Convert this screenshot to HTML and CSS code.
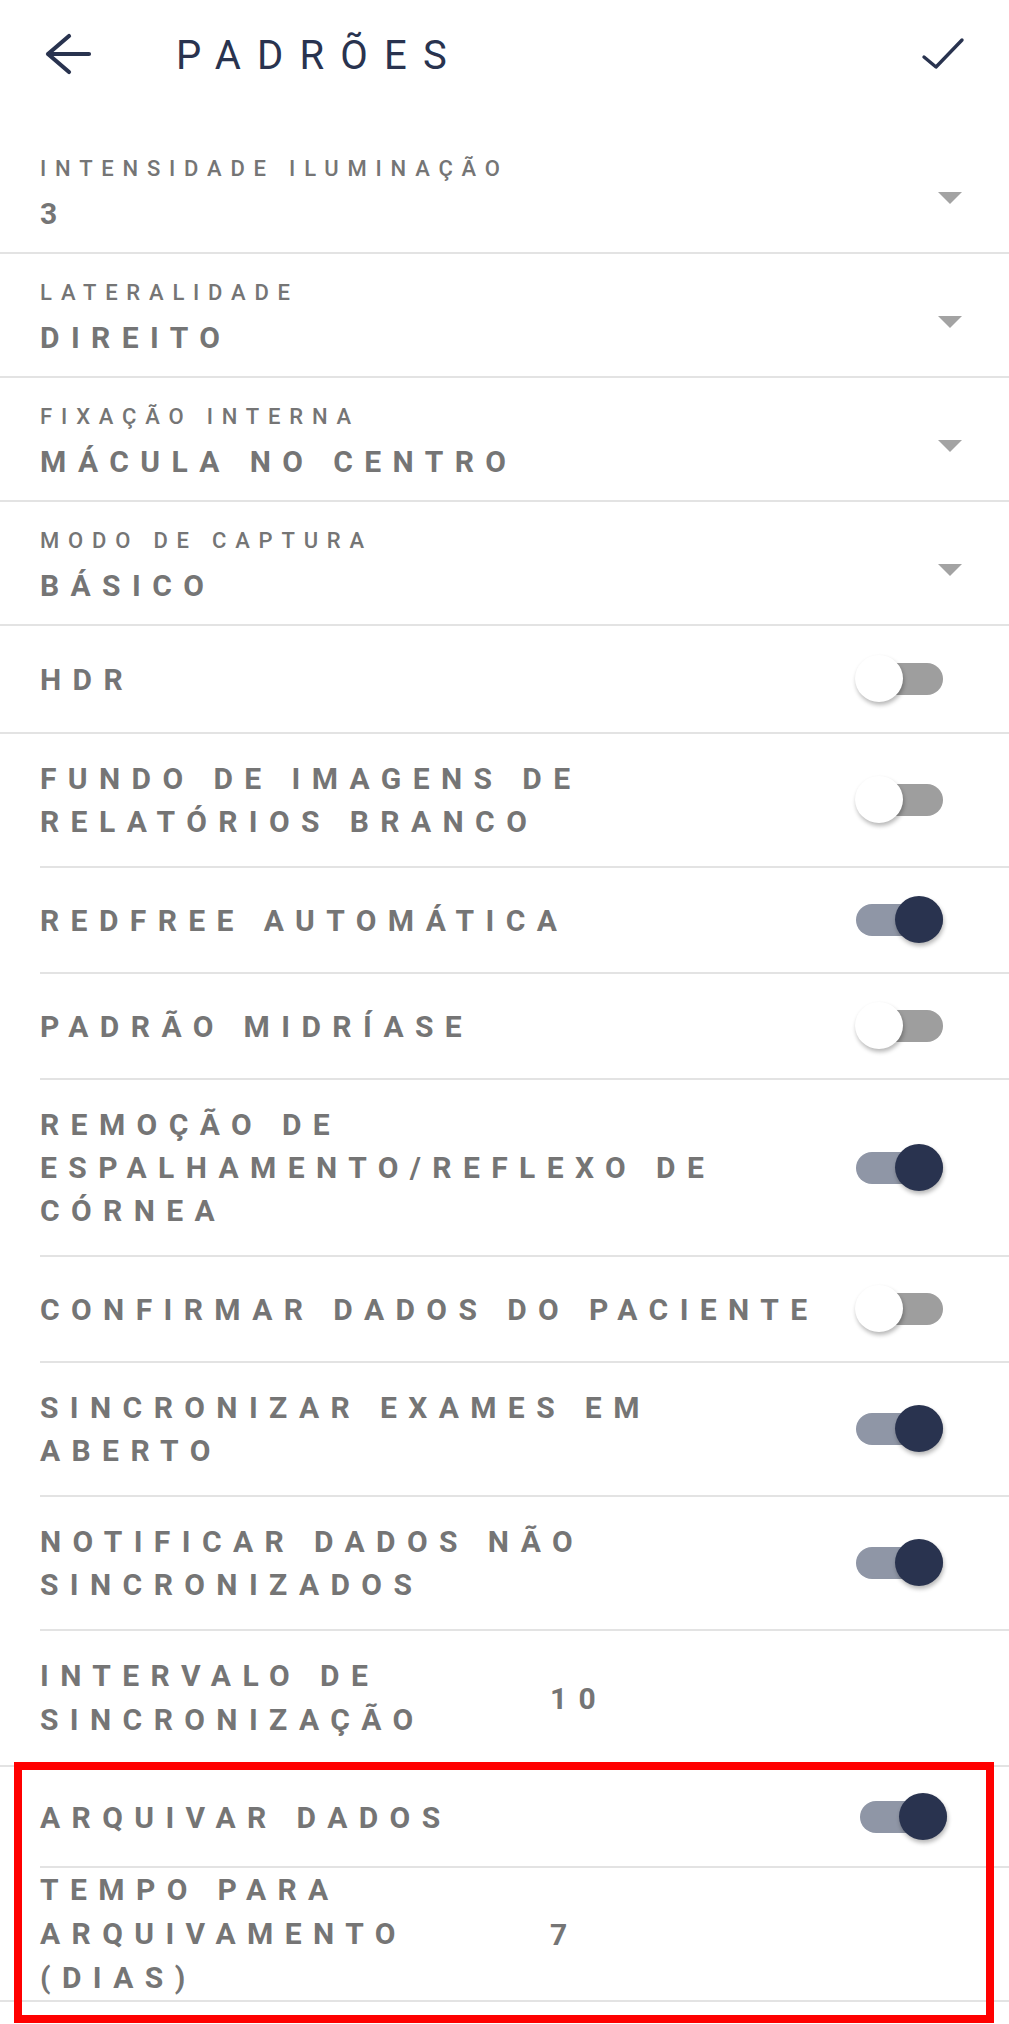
FILE: index.html
```html
<!DOCTYPE html>
<html lang="pt-BR">
<head>
  <meta charset="UTF-8" />
  <meta name="viewport" content="width=device-width, initial-scale=1.0" />
  <title>Padrões</title>
  <link rel="stylesheet" href="styles.css">
</head>
<body>

  <!-- Top bar -->
  <header class="topbar">
    <svg class="icon-back" width="56" height="56" viewBox="0 0 56 56">
      <path d="M49 28H8M29 10L8 28l21 18" fill="none" stroke="#29334f" stroke-width="4.2" stroke-linecap="round" stroke-linejoin="round" />
    </svg>
    <h1 class="title">PADRÕES</h1>
    <svg class="icon-check" width="48" height="48" viewBox="0 0 48 48">
      <path d="M3 27l12 10L41 10" fill="none" stroke="#29334f" stroke-width="3.4" stroke-linecap="round" stroke-linejoin="round" />
    </svg>
  </header>

  <main class="settings">

    <!-- Dropdowns -->
    <div class="select-row">
      <div class="select-body">
        <div class="select-label">INTENSIDADE ILUMINAÇÃO</div>
        <div class="select-value">3</div>
      </div>
      <span class="caret"></span>
    </div>
    <div class="select-row">
      <div class="select-body">
        <div class="select-label">LATERALIDADE</div>
        <div class="select-value">DIREITO</div>
      </div>
      <span class="caret"></span>
    </div>
    <div class="select-row">
      <div class="select-body">
        <div class="select-label">FIXAÇÃO INTERNA</div>
        <div class="select-value">MÁCULA NO CENTRO</div>
      </div>
      <span class="caret"></span>
    </div>
    <div class="select-row">
      <div class="select-body">
        <div class="select-label">MODO DE CAPTURA</div>
        <div class="select-value">BÁSICO</div>
      </div>
      <span class="caret"></span>
    </div>

    <!-- Switches -->
    <div class="switch-row full">
      <span class="row-name">HDR</span>
      <span class="switch"><span class="track"></span><span class="thumb"></span></span>
    </div>
    <div class="switch-row">
      <span class="row-name">FUNDO DE IMAGENS DE RELATÓRIOS BRANCO</span>
      <span class="switch"><span class="track"></span><span class="thumb"></span></span>
    </div>
    <div class="switch-row">
      <span class="row-name">REDFREE AUTOMÁTICA</span>
      <span class="switch on"><span class="track"></span><span class="thumb"></span></span>
    </div>
    <div class="switch-row">
      <span class="row-name">PADRÃO MIDRÍASE</span>
      <span class="switch"><span class="track"></span><span class="thumb"></span></span>
    </div>
    <div class="switch-row">
      <span class="row-name">REMOÇÃO DE ESPALHAMENTO/REFLEXO DE CÓRNEA</span>
      <span class="switch on"><span class="track"></span><span class="thumb"></span></span>
    </div>
    <div class="switch-row">
      <span class="row-name">CONFIRMAR DADOS DO PACIENTE</span>
      <span class="switch"><span class="track"></span><span class="thumb"></span></span>
    </div>
    <div class="switch-row">
      <span class="row-name">SINCRONIZAR EXAMES EM ABERTO</span>
      <span class="switch on"><span class="track"></span><span class="thumb"></span></span>
    </div>
    <div class="switch-row">
      <span class="row-name">NOTIFICAR DADOS NÃO SINCRONIZADOS</span>
      <span class="switch on"><span class="track"></span><span class="thumb"></span></span>
    </div>

    <!-- Number fields -->
    <div class="value-row">
      <span class="row-name">INTERVALO DE SINCRONIZAÇÃO</span>
      <span class="row-value">10</span>
    </div>
    <div class="switch-row compact">
      <span class="row-name">ARQUIVAR DADOS</span>
      <span class="switch on"><span class="track"></span><span class="thumb"></span></span>
    </div>
    <div class="value-row tight">
      <span class="row-name">TEMPO PARA ARQUIVAMENTO (DIAS)</span>
      <span class="row-value">7</span>
    </div>

  </main>

  <!-- Highlight frame -->
  <div class="highlight"></div>

</body>
</html>
```

FILE: styles.css
```css
body {
  margin: 0;
  padding: 0;
  background: #fff;
  font-family: Roboto, "Noto Sans", sans-serif;
  color: #757575;
  position: relative;
  min-height: 2024px;
}
.topbar {
  display: flex;
  align-items: center;
  height: 108px;
  padding: 0 40px;
}
.icon-back {
  flex: none;
}
.title {
  margin: 0 0 0 80px;
  flex: 1;
  font-size: 40px;
  font-weight: 400;
  letter-spacing: 16.2px;
  color: #29334f;
  line-height: 48px;
  padding-top: 4px;
}
.icon-check {
  flex: none;
}
.settings {
  padding-top: 22px;
}
.select-row {
  display: flex;
  align-items: center;
  padding: 24px 47px 18px 40px;
  border-bottom: 2px solid #e3e3e3;
}
.select-body {
  flex: 1;
}
.select-label {
  font-size: 22px;
  line-height: 30px;
  font-weight: 500;
  letter-spacing: 8.8px;
}
.select-value {
  margin-top: 10px;
  font-size: 30px;
  line-height: 40px;
  font-weight: 700;
  letter-spacing: 11.4px;
}
.caret {
  flex: none;
  width: 0;
  height: 0;
  margin-top: 8px;
  border-left: 12.5px solid transparent;
  border-right: 12.5px solid transparent;
  border-top: 12px solid #a3a3a3;
}
.row-name {
  font-size: 30px;
  line-height: 43px;
  font-weight: 700;
  letter-spacing: 11.4px;
}
.switch-row {
  display: flex;
  align-items: center;
  margin-left: 40px;
  padding: 23px 66px 23px 0;
  border-bottom: 2px solid #e3e3e3;
}
.switch-row .row-name {
  flex: 1;
}
.switch-row.full {
  margin-left: 0;
  padding: 24px 66px 24px 40px;
}
.switch-row.compact {
  padding: 21px 62px 20px 0;
}
.switch {
  flex: none;
  position: relative;
  width: 88px;
  height: 58px;
  margin-left: 16px;
}
.switch .track {
  position: absolute;
  left: 1px;
  right: 0;
  top: 13px;
  height: 32px;
  border-radius: 16px;
  background: #9e9e9e;
}
.switch .thumb {
  position: absolute;
  left: 0;
  top: 5px;
  width: 48px;
  height: 47px;
  border-radius: 50%;
  background: #fff;
  box-shadow: 1px 3px 4px rgba(0, 0, 0, 0.28);
}
.switch.on .track {
  background: #8f96a6;
}
.switch.on .thumb {
  left: auto;
  right: 0;
  background: #29334f;
}
.value-row {
  display: flex;
  align-items: center;
  padding: 23px 0 23px 40px;
  border-bottom: 2px solid #e3e3e3;
}
.value-row .row-name {
  flex: none;
  width: 490px;
  margin-right: 20px;
  line-height: 44px;
}
.value-row.tight {
  padding-top: 0;
  padding-bottom: 0;
}
.row-value {
  font-size: 30px;
  font-weight: 700;
  letter-spacing: 11.4px;
}
.highlight {
  position: absolute;
  left: 14px;
  top: 1762px;
  width: 980px;
  height: 261px;
  box-sizing: border-box;
  border: 8px solid #ff0000;
}
```
